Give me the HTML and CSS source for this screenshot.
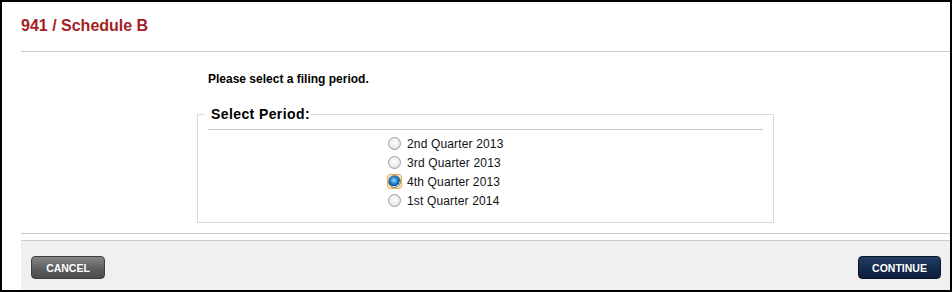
FILE: index.html
```html
<!DOCTYPE html>
<html lang="en">
<head>
    <meta charset="UTF-8">
    <title>941 / Schedule B</title>
    <link rel="stylesheet" href="styles.css">
</head>
<body>
    <div class="frame">
        <div class="page">
            <div class="header">
                <h1>941 / Schedule B</h1>
            </div>

            <div class="panel">
                <p class="intro">Please select a filing period.</p>

                <fieldset class="period-box">
                    <legend>Select Period:</legend>
                    <div class="rule"></div>
                    <div class="periods">
                        <label class="period">
                            <span class="radio-wrap"><input type="radio" name="period" value="2013q2"></span>
                            2nd Quarter 2013
                        </label>
                        <label class="period">
                            <span class="radio-wrap"><input type="radio" name="period" value="2013q3"></span>
                            3rd Quarter 2013
                        </label>
                        <label class="period">
                            <span class="radio-wrap focused"><input type="radio" name="period" value="2013q4" checked></span>
                            4th Quarter 2013
                        </label>
                        <label class="period">
                            <span class="radio-wrap"><input type="radio" name="period" value="2014q1"></span>
                            1st Quarter 2014
                        </label>
                    </div>
                </fieldset>
            </div>

            <div class="divider"></div>

            <div class="footer">
                <button class="btn cancel-btn">CANCEL</button>
                <button class="btn continue-btn">CONTINUE</button>
            </div>
        </div>
    </div>
</body>
</html>
```

FILE: styles.css
```css
body {
    margin: 0;
    font-family: 'Liberation Sans', Arial, sans-serif;
    color: #000;
    background-color: #fff;
}
.frame {
    height: 292px;
    box-sizing: border-box;
    border: 2px solid #000;
    display: flex;
    flex-direction: column;
}
.page {
    flex: 1;
    margin-left: 19px;
    display: flex;
    flex-direction: column;
}
.header {
    height: 49px;
    border-bottom: 1px solid #cccccc;
}
h1 {
    margin: 0;
    padding-top: 15px;
    font-size: 16px;
    line-height: 18px;
    font-weight: bold;
    color: #a31f24;
}
.panel {
    width: 577px;
    margin: 0 auto;
}
.intro {
    margin: 20px 0 0;
    padding-left: 11px;
    font-size: 12px;
    line-height: 14px;
    font-weight: bold;
}
.period-box {
    margin: 20px 0 0;
    padding: 0 10px 12px;
    border: 1px solid #d9d9d9;
    box-sizing: border-box;
    width: 577px;
}
.period-box legend {
    margin-left: -4px;
    padding: 0 1px 0 7px;
    font-size: 14px;
    line-height: 16px;
    font-weight: bold;
    letter-spacing: 0.4px;
}
.rule {
    margin-top: 7px;
    border-top: 1px solid #cccccc;
}
.periods {
    margin-top: 4px;
    padding-left: 179px;
}
.period {
    display: flex;
    align-items: center;
    height: 19px;
    font-size: 12px;
    letter-spacing: 0.15px;
    color: #111;
}
.radio-wrap {
    width: 15px;
    height: 15px;
    box-sizing: border-box;
    display: inline-flex;
    align-items: center;
    justify-content: center;
    margin-right: 5px;
    border: 1px solid transparent;
    border-radius: 3px;
}
.radio-wrap.focused {
    border-color: #e9b24f;
    background-color: #fbe6c0;
}
.radio-wrap input {
    appearance: none;
    -webkit-appearance: none;
    margin: 0;
    width: 13px;
    height: 13px;
    flex: none;
    border-radius: 50%;
    border: 1px solid #9c9c9c;
    background: radial-gradient(circle at 50% 40%, #ffffff 0%, #ececec 55%, #cfcfcf 100%);
    box-sizing: border-box;
}
.radio-wrap input:checked {
    background:
        radial-gradient(circle at 45% 40%, #9fd8ff 0%, #2f8fd0 35%, #0b4f88 62%, transparent 66%),
        radial-gradient(circle at 50% 40%, #ffffff 0%, #ececec 55%, #cfcfcf 100%);
    border-color: #6f7f8f;
}
.divider {
    margin-top: 10px;
    border-top: 1px solid #cccccc;
}
.footer {
    flex: 1;
    margin-top: 6px;
    border-top: 1px solid #cccccc;
    background-color: #f0f0f0;
    padding: 15px 9px 0 10px;
    display: flex;
    justify-content: space-between;
    align-items: flex-start;
}
.btn {
    height: 23px;
    padding: 0;
    border-radius: 4px;
    font-family: 'Liberation Sans', Arial, sans-serif;
    font-size: 10.5px;
    font-weight: bold;
    color: #fff;
    cursor: pointer;
}
.cancel-btn {
    width: 74px;
    border: 1px solid #3f3f3f;
    background: linear-gradient(#858585, #5e5e5e 55%, #4c4c4c);
}
.continue-btn {
    width: 83px;
    border: 1px solid #0a1528;
    background: linear-gradient(#243d66, #142a4d 55%, #0d1f3c);
}
```
